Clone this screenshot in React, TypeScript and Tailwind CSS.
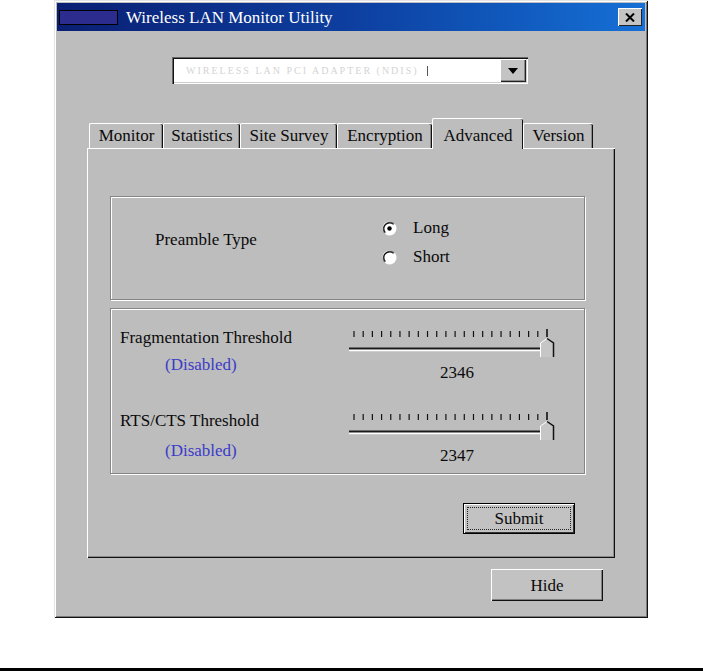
import React from 'react';

const tabs = [
  { label: 'Monitor', w: 74 },
  { label: 'Statistics', w: 77 },
  { label: 'Site Survey', w: 97 },
  { label: 'Encryption', w: 95 },
  { label: 'Advanced', w: 91, active: true },
  { label: 'Version', w: 70 },
];

export default function App() {
  return (
    <div className="w-[703px] h-[671px] bg-white flex flex-col font-['Liberation_Serif',serif] text-[17px] text-[#0a0a0a]">
      <div className="ml-[54px] w-[594px] h-[618px] bg-[#bdbdbd] p-[3px] flex flex-col shadow-[inset_1px_1px_0_#e4e4e4,inset_-1px_-1px_0_#111,inset_2px_2px_0_#fff,inset_-2px_-2px_0_#7a7a7a]">
        {/* title bar */}
        <div className="h-[28px] flex items-center bg-linear-to-r from-[#0a1f73] via-[#0d3fa0] to-[#1670d6]">
          <div className="ml-[2px] w-[59px] h-[15px] bg-[#2c2c8e] border border-black" />
          <span className="ml-[8px] text-white text-[17px] leading-none">Wireless LAN Monitor Utility</span>
          <div className="ml-auto mr-[3px] w-[24px] h-[18px] bg-[#c4c4c4] flex items-center justify-center shadow-[inset_1px_1px_0_#fff,inset_-1px_-1px_0_#222]">
            <svg width="10" height="9" viewBox="0 0 10 9">
              <path d="M1 0.5 L9 8.5 M9 0.5 L1 8.5" stroke="#000" strokeWidth="2" />
            </svg>
          </div>
        </div>

        {/* adapter combo */}
        <div className="mt-[26px] ml-[115px] w-[356px] h-[27px] bg-white flex items-center shadow-[inset_1px_1px_0_#666,inset_2px_2px_0_#111,inset_-1px_-1px_0_#fff,inset_-2px_-2px_0_#ccc]">
          <span className="ml-[14px] text-[10px] tracking-[2px] text-[#d4d4d4] leading-none">WIRELESS LAN PCI ADAPTER (NDIS)</span>
          <div className="ml-[8px] w-px h-[10px] bg-[#555]" />
          <div className="ml-auto mr-[2px] w-[26px] h-[23px] bg-[#c4c4c4] flex items-center justify-center shadow-[inset_1px_1px_0_#fff,inset_-1px_-1px_0_#222,inset_-2px_-2px_0_#888]">
            <svg width="10" height="6" viewBox="0 0 10 6">
              <path d="M0 0 H10 L5 6 Z" fill="#000" />
            </svg>
          </div>
        </div>

        {/* tabs */}
        <div className="mt-[34px] ml-[30px] w-[528px]">
          <div className="flex items-end pl-[2px] h-[30px]">
            {tabs.map((t) =>
              t.active ? (
                <div
                  key={t.label}
                  className="relative z-10 h-[31px] -mb-px bg-[#bdbdbd] flex justify-center pt-[4px] rounded-t-[2px] border-t border-l border-white shadow-[inset_-1px_0_0_#111]"
                  style={{ width: t.w }}
                >
                  {t.label}
                </div>
              ) : (
                <div
                  key={t.label}
                  className="h-[25px] bg-[#bdbdbd] flex items-center justify-center rounded-t-[2px] border-t border-l border-white shadow-[inset_-1px_0_0_#111,inset_-2px_0_0_#8a8a8a]"
                  style={{ width: t.w }}
                >
                  {t.label}
                </div>
              )
            )}
          </div>

          {/* panel */}
          <div className="h-[410px] border-t border-l border-white shadow-[inset_-1px_-1px_0_#111,inset_-2px_-2px_0_#8a8a8a] flex flex-col">
            {/* preamble */}
            <div className="mt-[47px] ml-[22px] w-[475px] h-[104px] border border-[#858585] shadow-[1px_1px_0_#fff,inset_1px_1px_0_#fff] flex">
              <div className="mt-[33px] ml-[44px] w-[227px] leading-[20px]">Preamble Type</div>
              <div className="mt-[21px] flex flex-col gap-[9px] leading-[20px]">
                <label className="flex items-center gap-[16px]">
                  <Radio checked />
                  <span>Long</span>
                </label>
                <label className="flex items-center gap-[16px]">
                  <Radio />
                  <span>Short</span>
                </label>
              </div>
            </div>

            {/* thresholds */}
            <div className="mt-[8px] ml-[22px] w-[475px] h-[166px] border border-[#858585] shadow-[1px_1px_0_#fff,inset_1px_1px_0_#fff] flex flex-col pt-[19px]">
              <ThresholdRow label="Fragmentation Threshold" value={2346} gap={7} />
              <div className="h-[28px]" />
              <ThresholdRow label="RTS/CTS Threshold" value={2347} gap={10} />
            </div>

            <div className="mt-[29px] ml-auto mr-[40px]">
              <button className="w-[112px] h-[31px] bg-[#c2c2c2] border border-black p-[3px] shadow-[inset_1px_1px_0_#fff,inset_-1px_-1px_0_#333]">
                <div className="w-full h-full border border-dotted border-[#222] flex items-center justify-center leading-none">
                  Submit
                </div>
              </button>
            </div>
          </div>
        </div>

        <div className="mt-[11px] ml-[434px]">
          <button className="w-[112px] h-[32px] bg-[#c2c2c2] flex items-center justify-center leading-none shadow-[inset_1px_1px_0_#fff,inset_-1px_-1px_0_#111,inset_-2px_-2px_0_#808080]">
            Hide
          </button>
        </div>
      </div>
      <div className="flex-1" />
      <div className="h-[3px] bg-black" />
    </div>
  );
}

function ThresholdRow({ label, value, gap }: { label: string; value: number; gap: number }) {
  return (
    <div className="flex leading-[20px]">
      <div className="ml-[9px] w-[227px] flex flex-col">
        <span>{label}</span>
        <span className="pl-[45px] text-[#3b3bc9]" style={{ marginTop: gap }}>
          (Disabled)
        </span>
      </div>
      <div className="w-[210px] flex flex-col items-center">
        <Slider />
        <span className="mt-[3px] pl-[10px]">{value}</span>
      </div>
    </div>
  );
}

function Slider() {
  const ticks = Array.from({ length: 22 }, (_, i) => 7 + (193 / 21) * i);
  return (
    <svg width="210" height="32" viewBox="0 0 210 32">
      {ticks.map((x, i) => (
        <line
          key={i}
          x1={x}
          x2={x}
          y1={i === 21 ? 1 : 3}
          y2={9}
          stroke="#111"
          strokeWidth={i === 21 ? 1.6 : 1.2}
        />
      ))}
      <line x1="2" x2="196" y1="20.5" y2="20.5" stroke="#1a1a1a" strokeWidth="2" />
      <line x1="2" x2="196" y1="22.5" y2="22.5" stroke="#fff" strokeWidth="1.5" />
      <path d="M193.5 29 V15 L200 10.5 L206.5 15 V29 Z" fill="#c6c6c6" />
      <path d="M193.5 29 V15 L200 10.5" stroke="#fff" strokeWidth="1" fill="none" />
      <path d="M200 10.5 L206.5 15 V29" stroke="#111" strokeWidth="1.5" fill="none" />
    </svg>
  );
}

function Radio({ checked }: { checked?: boolean }) {
  return (
    <svg width="15" height="15" viewBox="0 0 15 15">
      <circle cx="7.5" cy="7.5" r="7" fill="#fff" />
      <path d="M2.6 12.4 A7 7 0 0 1 12.4 2.6" stroke="#666" strokeWidth="1" fill="none" />
      <path d="M3.4 11.6 A5.8 5.8 0 0 1 11.6 3.4" stroke="#111" strokeWidth="1.2" fill="none" />
      {checked && <circle cx="7.5" cy="7.5" r="2.2" fill="#000" />}
    </svg>
  );
}
